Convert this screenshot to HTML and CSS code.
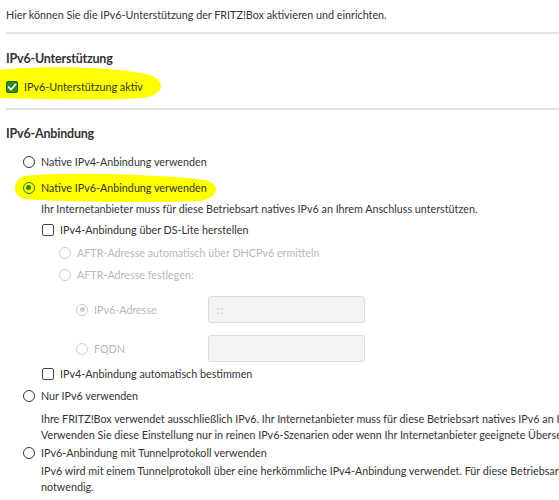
FILE: index.html
```html
<!DOCTYPE html>
<html lang="de">
<head>
<meta charset="utf-8">
<title>IPv6</title>
<link rel="stylesheet" href="styles.css">
</head>
<body>
<div class="page">
  <svg class="marks" width="600" height="500" viewBox="0 0 600 500" aria-hidden="true">
    <path d="M0,70 C40,65 120,67 150,75 C167,81 164,96 142,98 C100,101 40,99 0,98 Z" fill="#ffff00"/>
    <path d="M24,176 C70,171 168,175 205,180 C222,184 219,198 200,201 C150,203 60,202 24,199 C12,196 12,180 24,176 Z" fill="#ffff00"/>
  </svg>

  <p class="intro">Hier können Sie die IPv6-Unterstützung der FRITZ!Box aktivieren und einrichten.</p>
  <div class="rule rule-a"></div>

  <h2 class="heading h-support">IPv6-Unterstützung</h2>
  <div class="row cb-main">
    <span class="box checked"><svg viewBox="0 0 12 12" width="12" height="12"><path d="M2.6,6.2 L5,8.6 L9.6,3.4" fill="none" stroke="#fff" stroke-width="1.7" stroke-linecap="round" stroke-linejoin="round"/></svg></span>
    <span class="label">IPv6-Unterstützung aktiv</span>
  </div>
  <div class="rule rule-b"></div>

  <h2 class="heading h-bind">IPv6-Anbindung</h2>

  <div class="row lvl1 r1"><span class="radio"></span><span class="label">Native IPv4-Anbindung verwenden</span></div>
  <div class="row lvl1 r2"><span class="radio on"></span><span class="label">Native IPv6-Anbindung verwenden</span></div>
  <p class="desc d1">Ihr Internetanbieter muss für diese Betriebsart natives IPv6 an Ihrem Anschluss unterstützen.</p>

  <div class="row lvl2 c1"><span class="box"></span><span class="label">IPv4-Anbindung über DS-Lite herstellen</span></div>
  <div class="row lvl3 r3 off"><span class="radio"></span><span class="label">AFTR-Adresse automatisch über DHCPv6 ermitteln</span></div>
  <div class="row lvl3 r4 off"><span class="radio"></span><span class="label">AFTR-Adresse festlegen:</span></div>

  <div class="field-row lvl4 f1 off">
    <div class="field-label"><span class="radio on"></span><span class="label">IPv6-Adresse</span></div>
    <div class="input">::</div>
  </div>
  <div class="field-row lvl4 f2 off">
    <div class="field-label"><span class="radio"></span><span class="label">FQDN</span></div>
    <div class="input"></div>
  </div>

  <div class="row lvl2 c2"><span class="box"></span><span class="label">IPv4-Anbindung automatisch bestimmen</span></div>

  <div class="row lvl1 r5"><span class="radio"></span><span class="label">Nur IPv6 verwenden</span></div>
  <p class="desc d2">Ihre FRITZ!Box verwendet ausschließlich IPv6. Ihr Internetanbieter muss für diese Betriebsart natives IPv6 an Ihrem Anschluss unterstützen.<br>Verwenden Sie diese Einstellung nur in reinen IPv6-Szenarien oder wenn Ihr Internetanbieter geeignete Übersetzungsmechanismen bereitstellt.</p>

  <div class="row lvl1 r6"><span class="radio"></span><span class="label">IPv6-Anbindung mit Tunnelprotokoll verwenden</span></div>
  <p class="desc d3">IPv6 wird mit einem Tunnelprotokoll über eine herkömmliche IPv4-Anbindung verwendet. Für diese Betriebsart ist keine IPv6-Unterstützung durch den Internetanbieter<br>notwendig.</p>
</div>
</body>
</html>
```
FILE: styles.css
```css
html {
  background: #ffffff;
  overflow: hidden;
}
body {
  margin: 0;
  font-family: Lato, "Noto Sans", sans-serif;
  font-size: 10.75px;
  color: #333333;
}
.page {
  position: relative;
  width: 1000px;
  padding-left: 6px;
}
.marks {
  position: absolute;
  left: 0;
  top: 0;
  z-index: -1;
}
p {
  margin: 0;
}
.intro {
  line-height: 16px;
  padding-top: 7px;
  white-space: nowrap;
}
.rule {
  height: 2px;
  background: #e2e2e2;
}
.rule-a { margin-top: 9px; }
.rule-b { margin-top: 13px; }
.heading {
  margin: 0;
  font-size: 12.5px;
  letter-spacing: -0.2px;
  line-height: 18px;
  font-weight: 700;
  color: #333333;
}
.h-support { margin-top: 16px; }
.h-bind { margin-top: 15px; }

.row {
  display: flex;
  align-items: center;
  gap: 6px;
  height: 16px;
  line-height: 16px;
  white-space: nowrap;
}
.cb-main { margin-top: 11px; }
.lvl1 { padding-left: 17px; }
.lvl2 { padding-left: 36px; }
.lvl3 { padding-left: 53px; }
.lvl4 { padding-left: 70px; }

.r1 { margin-top: 11px; }
.r2 { margin-top: 10px; }
.d1 { margin-top: 5px; }
.c1 { margin-top: 5px; }
.r3 { margin-top: 7px; }
.r4 { margin-top: 6px; }
.f1 { margin-top: 13px; }
.f2 { margin-top: 12px; }
.c2 { margin-top: 4px; }
.r5 { margin-top: 6px; }
.d2 { margin-top: 7px; }
.r6 { margin-top: 2px; }
.d3 { margin-top: 2px; }

.desc {
  padding-left: 35px;
  line-height: 16px;
  white-space: nowrap;
}

.box {
  box-sizing: border-box;
  width: 12px;
  height: 12px;
  border: 1.5px solid #444444;
  border-radius: 2px;
  flex: none;
  display: flex;
  align-items: center;
  justify-content: center;
}
.box svg { display: block; }
.box.checked {
  background: #2f8a22;
  border-color: #24601c;
}
.box.checked svg { margin: -1.5px; }

.radio {
  box-sizing: border-box;
  width: 12px;
  height: 12px;
  border: 1.5px solid #333333;
  border-radius: 50%;
  flex: none;
  position: relative;
}
.radio.on {
  border-color: #2c7d24;
}
.radio.on::after {
  content: "";
  position: absolute;
  left: 2px;
  top: 2px;
  width: 5px;
  height: 5px;
  border-radius: 50%;
  background: #2c8a24;
}

.off .label { color: #b8b8b8; }
.off .radio { border-color: #cccccc; border-width: 1px; }
.off .radio.on::after { background: #cfcfcf; left: 2.5px; top: 2.5px; width: 5px; height: 5px; }

.field-row {
  display: flex;
  align-items: center;
  height: 27px;
}
.field-label {
  display: flex;
  align-items: center;
  gap: 6px;
  width: 132px;
  white-space: nowrap;
}
.input {
  box-sizing: border-box;
  width: 157px;
  height: 27px;
  background: #f3f3f3;
  border: 1px solid #dddddd;
  border-radius: 3px;
  padding-left: 8px;
  line-height: 25px;
  font-size: 11px;
  letter-spacing: 1px;
  color: #c4c4c4;
}
```
